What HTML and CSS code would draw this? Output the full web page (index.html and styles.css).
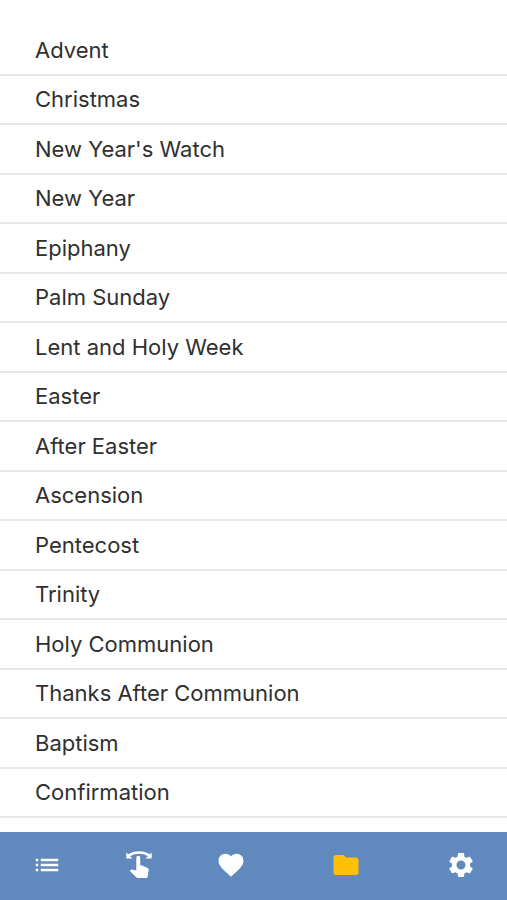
FILE: index.html
```html
<!DOCTYPE html>
<html lang="en">
<head>
<meta charset="utf-8">
<meta name="viewport" content="width=device-width, initial-scale=1">
<title>Categories</title>
<link rel="stylesheet" href="styles.css">
</head>
<body>
<main class="content">
  <ul class="list">
    <li><a href="#">Advent</a></li>
    <li><a href="#">Christmas</a></li>
    <li><a href="#">New Year's Watch</a></li>
    <li><a href="#">New Year</a></li>
    <li><a href="#">Epiphany</a></li>
    <li><a href="#">Palm Sunday</a></li>
    <li><a href="#">Lent and Holy Week</a></li>
    <li><a href="#">Easter</a></li>
    <li><a href="#">After Easter</a></li>
    <li><a href="#">Ascension</a></li>
    <li><a href="#">Pentecost</a></li>
    <li><a href="#">Trinity</a></li>
    <li><a href="#">Holy Communion</a></li>
    <li><a href="#">Thanks After Communion</a></li>
    <li><a href="#">Baptism</a></li>
    <li><a href="#">Confirmation</a></li>
  </ul>
</main>
<nav class="tabs">
  <button class="tab" type="button" aria-label="List">
    <svg viewBox="0 0 24 24"><path d="M3 13h2v-2H3v2zm0 4h2v-2H3v2zm0-8h2V7H3v2zm4 4h14v-2H7v2zm0 4h14v-2H7v2zM7 7v2h14V7H7z"/></svg>
  </button>
  <button class="tab" type="button" aria-label="Swipe">
    <svg viewBox="0 0 30 30"><path d="M2.300 2.400 4.200 4.300C7.300 2.100 11 1.200 15 1.200s7.700.9 10.800 3.100l1.900-1.900v6.200h-6.200l2.400-2.400C21.400 4.500 18.400 3.700 15 3.700S8.600 4.500 6.100 6.200l2.400 2.400H2.300z"/><path d="M12.300 7.700a1.950 1.950 0 0 1 3.900 0v7.500h1.200l6.200 2.800c.8.400 1.200 1.100 1.100 2l-1 6.400c-.2 1.100-.9 1.700-1.900 1.700h-7.700c-.6 0-1.100-.2-1.500-.6L5.800 20.900l1-1c.4-.4.900-.5 1.400-.4l4.100.9z"/></svg>
  </button>
  <button class="tab" type="button" aria-label="Favorites">
    <svg viewBox="0 0 24 24"><path d="M12 21.350l-1.450-1.320C5.400 15.360 2 12.280 2 8.500 2 5.420 4.420 3 7.500 3c1.740 0 3.410.81 4.500 2.090C13.090 3.810 14.760 3 16.500 3 19.580 3 22 5.420 22 8.500c0 3.780-3.400 6.860-8.550 11.540L12 21.350z"/></svg>
  </button>
  <button class="tab tab-active" type="button" aria-label="Categories" aria-current="page">
    <svg viewBox="0 0 24 24"><path d="M10 4H4c-1.100 0-1.990.9-1.990 2L2 18c0 1.100.9 2 2 2h16c1.100 0 2-.9 2-2V8c0-1.100-.9-2-2-2h-8l-2-2z"/></svg>
  </button>
  <button class="tab" type="button" aria-label="Settings">
    <svg viewBox="0 0 24 24"><path d="M19.140 12.940c.04-.3.060-.61.060-.94 0-.32-.02-.64-.07-.94l2.030-1.580c.18-.14.230-.41.120-.61l-1.920-3.320c-.12-.22-.37-.29-.59-.22l-2.390.96c-.5-.38-1.030-.7-1.620-.94l-.36-2.540c-.04-.24-.24-.41-.48-.41h-3.840c-.24 0-.43.170-.47.410l-.36 2.540c-.59.240-1.130.57-1.620.94l-2.390-.96c-.22-.08-.47 0-.59.220L2.740 8.870c-.12.210-.08.470.120.610l2.030 1.580c-.05.300-.09.630-.09.940s.02.640.070.940l-2.030 1.580c-.18.140-.23.410-.12.610l1.920 3.320c.12.220.37.290.59.220l2.390-.96c.5.380 1.030.7 1.620.94l.36 2.540c.05.240.24.410.48.410h3.840c.24 0 .44-.17.470-.41l.36-2.540c.59-.24 1.130-.56 1.620-.94l2.390.96c.22.080.47 0 .59-.22l1.920-3.320c.12-.22.070-.47-.12-.61l-2.010-1.580zM12 15.600c-1.980 0-3.600-1.620-3.600-3.600s1.620-3.600 3.600-3.600 3.600 1.620 3.600 3.600-1.620 3.600-3.600 3.600z"/></svg>
  </button>
</nav>
</body>
</html>
```
FILE: styles.css
```css
* {
  box-sizing: border-box;
}

body {
  margin: 0;
  min-height: 100vh;
  display: flex;
  flex-direction: column;
  background: #fff;
  color: #303030;
  font-family: Inter, "Liberation Sans", sans-serif;
  font-size: 22px;
  line-height: 28px;
}

.content {
  flex: 1;
  display: flex;
  flex-direction: column;
  padding: 26px 0 14px;
}

.list {
  flex: 1;
  display: grid;
  grid-auto-rows: 1fr;
  margin: 0;
  padding: 0;
  list-style: none;
}

.list li {
  display: flex;
  border-bottom: 2px solid #e8e8e8;
}

.list a {
  flex: 1;
  display: flex;
  align-items: center;
  padding: 0 35px;
  color: inherit;
  text-decoration: none;
}

.tabs {
  position: sticky;
  bottom: 0;
  display: flex;
  height: 68px;
  padding-left: 1px;
  background: #6089be;
}

.tab {
  flex: 2;
  display: flex;
  align-items: center;
  justify-content: center;
  padding: 0 0 3px;
  border: 0;
  background: none;
  color: #fff;
}

.tab-active {
  flex: 3;
  color: #ffc107;
}

.tab svg {
  width: 30px;
  height: 30px;
  fill: currentColor;
}
```
